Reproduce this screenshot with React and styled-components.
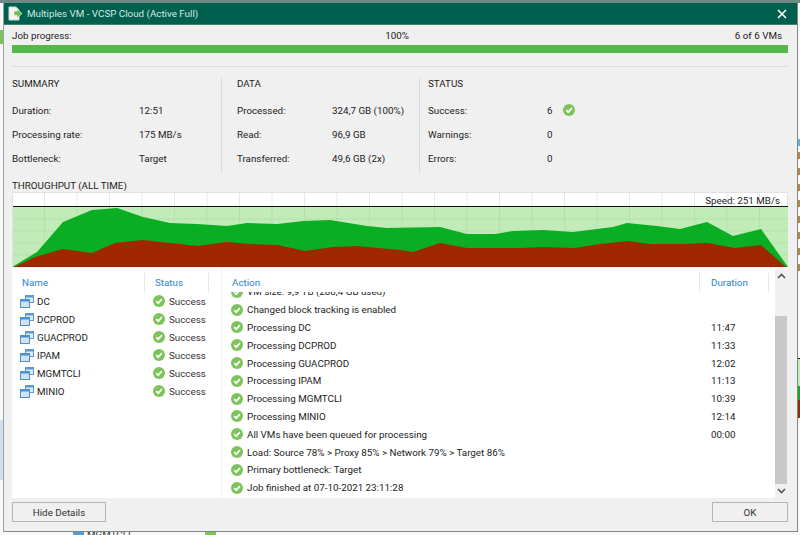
import React from 'react';
import styled, { createGlobalStyle } from 'styled-components';

const GlobalStyle = createGlobalStyle`
  html, body {
    margin: 0;
    padding: 0;
    background: #f4f4f4;
    overflow: hidden;
  }
  * {
    box-sizing: border-box;
  }
`;

const Desktop = styled.div`
  position: relative;
  width: 800px;
  height: 535px;
  padding: 3px 0 0 3px;
  background: #f8f8f8;
  overflow: hidden;
  font-family: 'Roboto', 'Noto Sans', sans-serif;
  font-size: 9.8px;
  color: #1c1c1c;
`;

const TopStrip = styled.div`
  position: absolute;
  left: 0;
  top: 0;
  width: 800px;
  height: 3px;
  background: #6f8a83;
`;

const SideMark = styled.div`
  position: absolute;
  left: ${(p) => p.$x}px;
  top: ${(p) => p.$y}px;
  width: ${(p) => p.$w}px;
  height: ${(p) => p.$h}px;
  background: ${(p) => p.$c};
`;

const BehindText = styled.div`
  position: absolute;
  left: 87px;
  top: 529px;
  color: #333;
`;

const Window = styled.div`
  position: relative;
  width: 795px;
  height: 529px;
  display: flex;
  flex-direction: column;
  background: #f0f0f0;
  border: 1px solid #7d8a86;
  border-top: 0;
  border-left-color: #9aa5a2;
`;

const TitleBar = styled.div`
  height: 22px;
  flex: none;
  display: flex;
  align-items: center;
  padding: 0 4px;
  background: #00604d;
  border-bottom: 1px solid #3a7f70;
  color: #d6e8e3;
`;

const TitleText = styled.div`
  flex: 1;
  margin-left: 5px;
`;

const Body = styled.div`
  flex: 1;
  display: flex;
  flex-direction: column;
  padding: 0 9px 0 8px;
  min-height: 0;
`;

const ProgressLabels = styled.div`
  display: grid;
  grid-template-columns: 1fr auto 1fr;
  height: 19px;
  align-items: center;
  padding-right: 6px;
  margin-top: 1px;
`;

const Right = styled.div`
  text-align: right;
`;

const ProgressBar = styled.div`
  height: 8px;
  background: #54b948;
`;

const Divider = styled.div`
  height: 1px;
  margin-top: 13px;
  background: #dfdfdf;
`;

const Stats = styled.div`
  display: flex;
  height: 95px;
  margin-top: 11px;
`;

const StatColumn = styled.div`
  width: ${(p) => p.$width}px;
  padding-left: ${(p) => p.$pad}px;
  border-left: ${(p) => (p.$line ? '1px solid #d9d9d9' : '0')};
`;

const StatTitle = styled.div`
  height: 12px;
  line-height: 12px;
  margin-bottom: 8px;
`;

const StatRow = styled.div`
  display: flex;
  align-items: center;
  height: 24px;
`;

const StatName = styled.div`
  width: ${(p) => p.$width}px;
`;

const StatValue = styled.div`
  width: ${(p) => (p.$narrow ? '16px' : 'auto')};
`;

const ChartTitle = styled.div`
  height: 12px;
  line-height: 12px;
  margin-top: 7px;
`;

const ChartBox = styled.div`
  position: relative;
  height: 75px;
  background: #fff;
  border: 1px solid #e2e2e2;
  border-bottom: 0;
`;

const Speed = styled.div`
  position: absolute;
  right: 7px;
  top: 2px;
  line-height: 12px;
`;

const Lists = styled.div`
  display: flex;
  height: 230px;
  margin-top: 1px;
`;

const LeftPanel = styled.div`
  width: 209px;
  flex: none;
  background: #fff;
`;

const RightPanel = styled.div`
  flex: 1;
  min-width: 0;
  display: flex;
  flex-direction: column;
  margin-left: 1px;
  background: #fff;
`;

const HeaderRow = styled.div`
  display: flex;
  flex: none;
  height: 19px;
  margin-top: 5px;
  align-items: center;
  color: #2b84cc;
`;

const HeaderCell = styled.div`
  width: ${(p) => p.$width}px;
  height: 100%;
  line-height: 19px;
  padding-left: ${(p) => p.$pad}px;
  border-right: ${(p) => (p.$line ? '1px solid #e8e8e8' : '0')};
  flex: none;
`;

const VmRow = styled.div`
  display: flex;
  align-items: center;
  height: 18px;
`;

const VmName = styled.div`
  width: 141px;
  display: flex;
  align-items: center;
  padding-left: 8px;
  gap: 3px;
`;

const VmStatus = styled.div`
  display: flex;
  align-items: center;
  gap: 4px;
  color: #333;
`;

const LogViewport = styled.div`
  flex: 1;
  min-height: 0;
  overflow: hidden;
`;

const LogInner = styled.div`
  margin-top: -9px;
`;

const LogRow = styled.div`
  display: flex;
  align-items: center;
  height: 17.8px;
  padding-left: 9px;
  gap: 4px;
`;

const LogText = styled.div`
  width: 460px;
  white-space: nowrap;
`;

const Track = styled.div`
  width: 12px;
  flex: none;
  height: 230px;
  margin: 0 1px 0 0;
  padding-top: 5px;
  display: flex;
  flex-direction: column;
  align-items: center;
`;

const Thumb = styled.div`
  width: 12px;
  height: 168px;
  margin-top: 37px;
  background: #c8c8c8;
`;

const Arrow = styled.svg`
  width: 9px;
  height: 6px;
  flex: none;
  margin-top: ${(p) => p.$top}px;
`;

const Footer = styled.div`
  display: flex;
  justify-content: space-between;
  align-items: flex-start;
  margin-top: 4px;
`;

const Button = styled.button`
  width: ${(p) => p.$width}px;
  height: 20px;
  padding: 0;
  background: #f0f0f0;
  border: 1px solid #b5b5b5;
  font-family: inherit;
  font-size: 9.8px;
  color: #333;
`;

const Close = styled.svg`
  width: 10px;
  height: 10px;
  margin-right: 6px;
`;

function CheckIcon() {
  return (
    <svg width="12" height="12" viewBox="0 0 12 12" style={{ flex: 'none' }}>
      <circle cx="6" cy="6" r="6" fill="#7cc35a" />
      <path d="M3.2 6.1 5.2 8.2 8.9 4.2" fill="none" stroke="#fff" strokeWidth="1.7" />
    </svg>
  );
}

function VmIcon() {
  return (
    <svg width="14" height="14" viewBox="0 0 14 14" style={{ flex: 'none' }}>
      <rect x="5.5" y="1.5" width="8" height="7" fill="#dcebf7" stroke="#5b9bd0" />
      <rect x="5.5" y="1.5" width="8" height="2" fill="#5b9bd0" />
      <rect x="0.5" y="5.5" width="9" height="8" fill="#cfe3f4" stroke="#4f90c8" />
      <rect x="0.5" y="5.5" width="9" height="2" fill="#4f90c8" />
    </svg>
  );
}

function JobIcon() {
  return (
    <svg width="14" height="15" viewBox="0 0 14 15" style={{ flex: 'none' }}>
      <path d="M1 1H8L11 4V14H1Z" fill="#f4f4f4" stroke="#cfd8d5" />
      <path d="M6 5H9V3L14 7.5 9 12V9.5H6Z" fill="#6fc04c" stroke="#fff" strokeWidth="0.6" />
    </svg>
  );
}

const GREEN_TOP = [[12,267],[37,252],[63,222],[92,210],[117,208],[143,217],[170,223],[197,224],[227,226],[247,223],[277,224],[303,221],[330,220],[367,226],[387,228],[440,227],[467,234],[495,234],[513,231],[543,230],[573,232],[613,227],[627,223],[657,226],[680,229],[707,222],[733,236],[761,229],[788,267]];
const RED_TOP = [[14,267],[35,257],[63,249],[92,253],[115,243],[143,240],[170,243],[198,246],[227,242],[250,244],[278,245],[305,251],[333,247],[357,246],[400,250],[413,252],[440,243],[467,248],[520,248],[543,247],[575,248],[600,244],[628,241],[650,244],[683,244],[707,243],[735,248],[761,245],[786,267]];

// chart coordinates are page pixels, the svg starts at 13,193
const toPoints = (list) => list.map(([x, y]) => `${x - 13},${y - 193}`).join(' ');
const GRID_X = Array.from({ length: 23 }, (_, i) => 32.5 * (i + 1) - 1);
const GRID_Y = [12, 24, 36, 48];

function Chart() {
  return (
    <svg width="775" height="74" viewBox="0 0 775 74" style={{ display: 'block' }}>
      {GRID_X.map((x) => (
        <line key={x} x1={x} x2={x} y1="0" y2="14" stroke="#e8e8e8" />
      ))}
      <rect x="0" y="14" width="775" height="60" fill="#c1ebb8" />
      {GRID_X.map((x) => (
        <line key={x} x1={x} x2={x} y1="14" y2="74" stroke="#b5e0ac" />
      ))}
      {GRID_Y.map((y) => (
        <line key={y} x1="0" x2="775" y1={y + 14} y2={y + 14} stroke="#b5e0ac" />
      ))}
      <polygon points={toPoints(GREEN_TOP)} fill="#0aae23" />
      <polygon points={toPoints(RED_TOP)} fill="#9f2800" />
      <line x1="0" x2="775" y1="13.5" y2="13.5" stroke="#111" />
    </svg>
  );
}

const VMS = ['DC', 'DCPROD', 'GUACPROD', 'IPAM', 'MGMTCLI', 'MINIO'];

const LOG = [
  ['VM size: 9,9 TB (288,4 GB used)', ''],
  ['Changed block tracking is enabled', ''],
  ['Processing DC', '11:47'],
  ['Processing DCPROD', '11:33'],
  ['Processing GUACPROD', '12:02'],
  ['Processing IPAM', '11:13'],
  ['Processing MGMTCLI', '10:39'],
  ['Processing MINIO', '12:14'],
  ['All VMs have been queued for processing', '00:00'],
  ['Load: Source 78% > Proxy 85% > Network 79% > Target 86%', ''],
  ['Primary bottleneck: Target', ''],
  ['Job finished at 07-10-2021 23:11:28', ''],
];

const SIDE_LETTERS = [152, 168, 184, 200, 216, 232, 248, 264];

function App() {
  return (
    <Desktop>
      <GlobalStyle />
      <TopStrip />
      <SideMark $x={0} $y={30} $w={3} $h={14} $c="#7cc35a" />
      <SideMark $x={0} $y={420} $w={3} $h={60} $c="#cfe0f0" />
      <SideMark $x={798} $y={139} $w={2} $h={7} $c="#6aaedc" />
      {SIDE_LETTERS.map((y) => (
        <SideMark key={y} $x={798} $y={y} $w={2} $h={7} $c="#b9853f" />
      ))}
      <SideMark $x={798} $y={358} $w={2} $h={1} $c="#111" />
      <SideMark $x={798} $y={359} $w={2} $h={27} $c="#c1ebb8" />
      <SideMark $x={798} $y={386} $w={2} $h={14} $c="#0aae23" />
      <SideMark $x={798} $y={400} $w={2} $h={18} $c="#9f2800" />
      <SideMark $x={73} $y={532} $w={11} $h={3} $c="#5b9bd0" />
      <SideMark $x={205} $y={532} $w={11} $h={3} $c="#7cc35a" />
      <BehindText>MGMTCLI</BehindText>
      <Window>
        <TitleBar>
          <JobIcon />
          <TitleText>Multiples VM - VCSP Cloud (Active Full)</TitleText>
          <Close viewBox="0 0 10 10">
            <path d="M1 1 9 9M9 1 1 9" stroke="#fff" strokeWidth="1.6" />
          </Close>
        </TitleBar>
        <Body>
          <ProgressLabels>
            <div>Job progress:</div>
            <div>100%</div>
            <Right>6 of 6 VMs</Right>
          </ProgressLabels>
          <ProgressBar />
          <Divider />
          <Stats>
            <StatColumn $width={209}>
              <StatTitle>SUMMARY</StatTitle>
              <StatRow>
                <StatName $width={127}>Duration:</StatName>
                <StatValue>12:51</StatValue>
              </StatRow>
              <StatRow>
                <StatName $width={127}>Processing rate:</StatName>
                <StatValue>175 MB/s</StatValue>
              </StatRow>
              <StatRow>
                <StatName $width={127}>Bottleneck:</StatName>
                <StatValue>Target</StatValue>
              </StatRow>
            </StatColumn>
            <StatColumn $width={198} $pad={15} $line>
              <StatTitle>DATA</StatTitle>
              <StatRow>
                <StatName $width={95}>Processed:</StatName>
                <StatValue>324,7 GB (100%)</StatValue>
              </StatRow>
              <StatRow>
                <StatName $width={95}>Read:</StatName>
                <StatValue>96,9 GB</StatValue>
              </StatRow>
              <StatRow>
                <StatName $width={95}>Transferred:</StatName>
                <StatValue>49,6 GB (2x)</StatValue>
              </StatRow>
            </StatColumn>
            <StatColumn $width={200} $pad={8} $line>
              <StatTitle>STATUS</StatTitle>
              <StatRow>
                <StatName $width={119}>Success:</StatName>
                <StatValue $narrow>6</StatValue>
                <CheckIcon />
              </StatRow>
              <StatRow>
                <StatName $width={119}>Warnings:</StatName>
                <StatValue>0</StatValue>
              </StatRow>
              <StatRow>
                <StatName $width={119}>Errors:</StatName>
                <StatValue>0</StatValue>
              </StatRow>
            </StatColumn>
          </Stats>
          <ChartTitle>THROUGHPUT (ALL TIME)</ChartTitle>
          <ChartBox>
            <Chart />
            <Speed>Speed: 251 MB/s</Speed>
          </ChartBox>
          <Lists>
            <LeftPanel>
              <HeaderRow>
                <HeaderCell $width={133} $pad={10} $line>Name</HeaderCell>
                <HeaderCell $width={64} $pad={10} $line>Status</HeaderCell>
              </HeaderRow>
              {VMS.map((vm) => (
                <VmRow key={vm}>
                  <VmName>
                    <VmIcon />
                    {vm}
                  </VmName>
                  <VmStatus>
                    <CheckIcon />
                    Success
                  </VmStatus>
                </VmRow>
              ))}
            </LeftPanel>
            <RightPanel>
              <HeaderRow>
                <HeaderCell $width={478} $pad={10} $line>Action</HeaderCell>
                <HeaderCell $width={69} $pad={11} $line>Duration</HeaderCell>
              </HeaderRow>
              <LogViewport>
                <LogInner>
                  {LOG.map(([text, time]) => (
                    <LogRow key={text}>
                      <CheckIcon />
                      <LogText>{text}</LogText>
                      <div>{time}</div>
                    </LogRow>
                  ))}
                </LogInner>
              </LogViewport>
            </RightPanel>
            <Track>
              <Arrow $top={0} viewBox="0 0 9 6">
                <path d="M1 5 4.5 1.5 8 5" fill="none" stroke="#555" strokeWidth="1.6" />
              </Arrow>
              <Thumb />
              <Arrow $top={4} viewBox="0 0 9 6">
                <path d="M1 1 4.5 4.5 8 1" fill="none" stroke="#555" strokeWidth="1.6" />
              </Arrow>
            </Track>
          </Lists>
          <Footer>
            <Button $width={94}>Hide Details</Button>
            <Button $width={76}>OK</Button>
          </Footer>
        </Body>
      </Window>
    </Desktop>
  );
}

export default App;
